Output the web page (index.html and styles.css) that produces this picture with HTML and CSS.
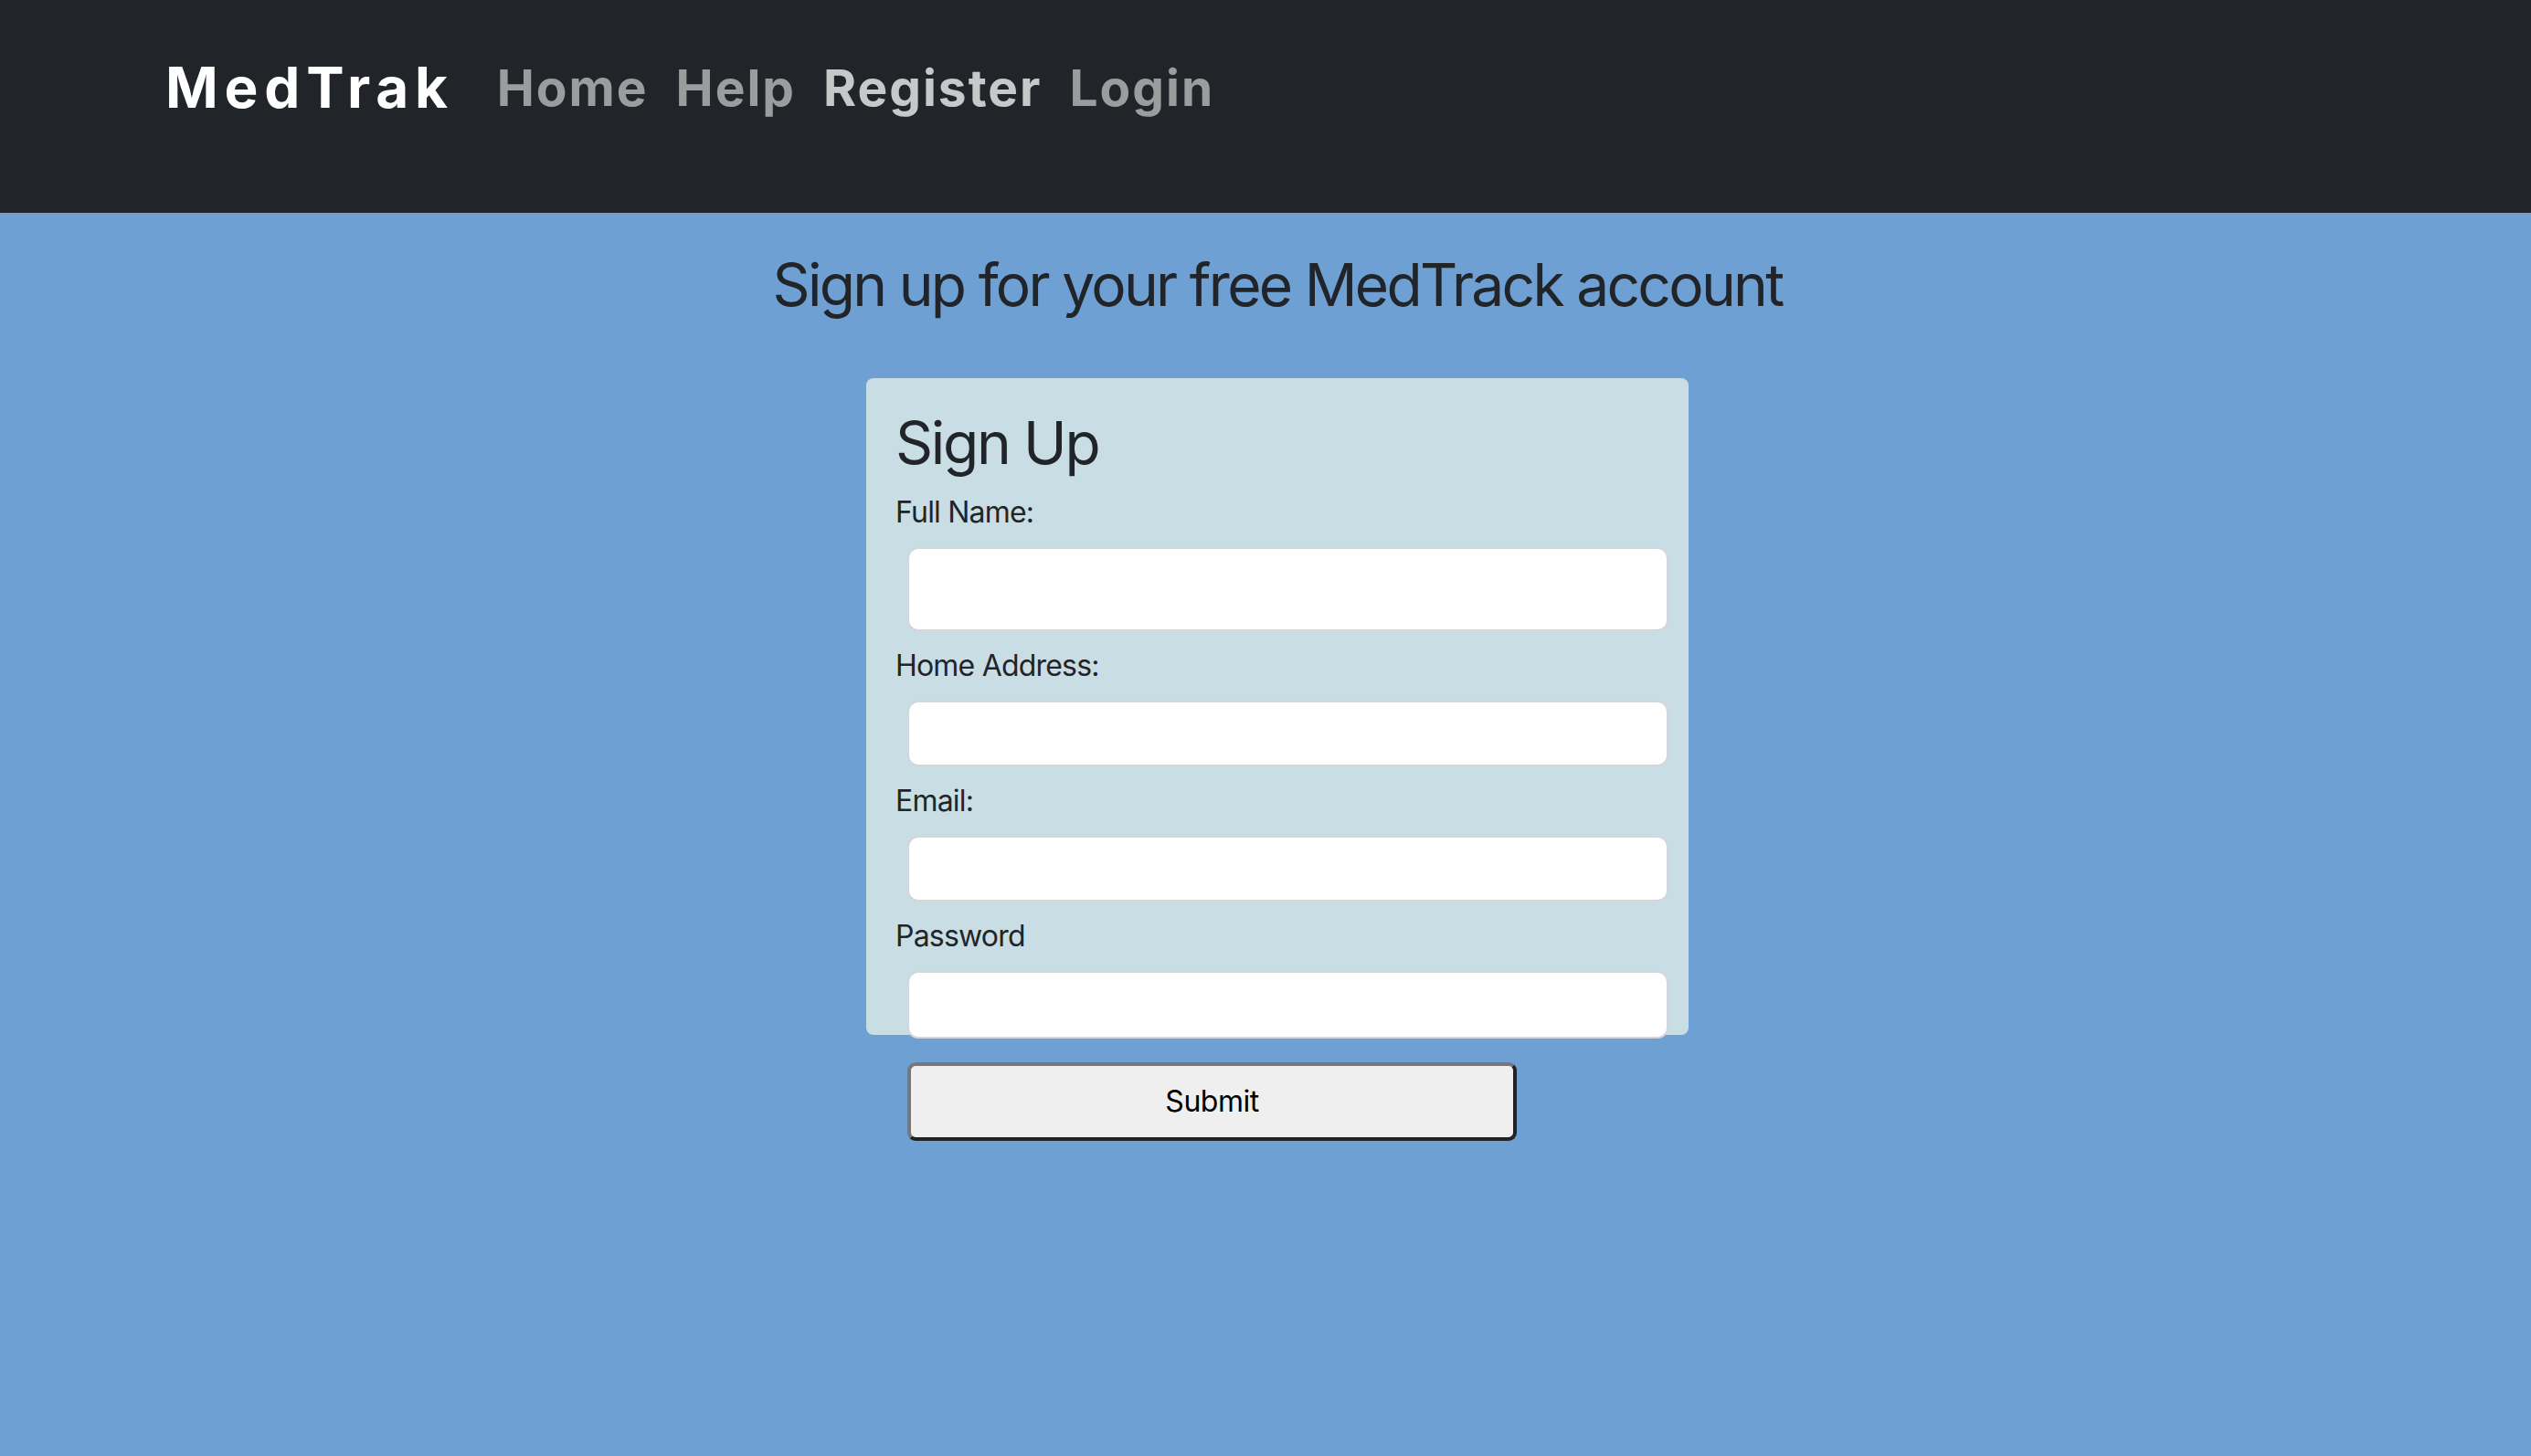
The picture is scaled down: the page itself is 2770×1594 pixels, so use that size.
FILE: index.html
```html
<!DOCTYPE html>
<html lang="en">
<head>
<meta charset="utf-8">
<title>MedTrak - Sign Up</title>
<link rel="stylesheet" href="styles.css">
</head>
<body>
  <nav class="navbar">
    <a class="brand" href="#">MedTrak</a>
    <ul class="nav-links">
      <li><a class="nav-link" href="#">Home</a></li>
      <li><a class="nav-link" href="#">Help</a></li>
      <li><a class="nav-link active" href="#">Register</a></li>
      <li><a class="nav-link" href="#">Login</a></li>
    </ul>
  </nav>
  <main class="page">
    <h2 class="page-title">Sign up for your free MedTrack account</h2>
    <section class="card">
      <h2 class="card-title">Sign Up</h2>
      <form class="signup-form">
        <label class="field-label" for="name">Full Name:</label>
        <input class="field field-name" id="name" type="text">
        <label class="field-label" for="address">Home Address:</label>
        <input class="field" id="address" type="text">
        <label class="field-label" for="email">Email:</label>
        <input class="field" id="email" type="email">
        <label class="field-label" for="password">Password</label>
        <input class="field field-last" id="password" type="password">
        <button class="submit" type="button">Submit</button>
      </form>
    </section>
  </main>
</body>
</html>
```
FILE: styles.css
```css
* { box-sizing: border-box; }

html, body {
  margin: 0;
  padding: 0;
}

body {
  background: #6fa0d4;
  font-family: Inter, "Noto Sans", "Liberation Sans", sans-serif;
  color: #212529;
  min-height: 1594px;
}

.navbar {
  background: #212529;
  height: 233px;
  display: flex;
  align-items: flex-start;
  padding: 65px 0 0 181px;
}

.brand {
  color: #ffffff;
  text-decoration: none;
  font-weight: 700;
  font-size: 62px;
  line-height: 1;
  letter-spacing: 0.11em;
  margin-right: 32px;
}

.nav-links {
  list-style: none;
  display: flex;
  margin: 4px 0 0 0;
  padding: 0;
}

.nav-link {
  display: block;
  padding: 0 15px;
  font-weight: 700;
  font-size: 55px;
  line-height: 1;
  letter-spacing: 2px;
  color: rgba(255, 255, 255, 0.55);
  text-decoration: none;
}

.nav-link.active {
  color: rgba(255, 255, 255, 0.75);
}

.page {
  padding-left: 26px;
}

.page-title {
  margin: 41px 0 0 0;
  text-align: center;
  font-weight: 400;
  font-size: 64px;
  line-height: 1.2;
  letter-spacing: -0.042em;
}

.card {
  width: 900px;
  height: 719px;
  margin: 63px auto 0 auto;
  padding: 33px 32px 0 32px;
  background: #c9dee4;
  border-radius: 8px;
}

.card-title {
  margin: 0 0 13px 0;
  font-weight: 400;
  font-size: 64px;
  line-height: 1.2;
  letter-spacing: -0.036em;
}

.signup-form {
  display: block;
}

.field-label {
  display: block;
  font-size: 32px;
  line-height: 48px;
  letter-spacing: -0.8px;
}

.field {
  display: block;
  width: 833px;
  height: 72px;
  margin: 14px 0 14px 13px;
  background: #ffffff;
  border: 2px solid #d3d6db;
  border-radius: 12px;
  font: inherit;
  font-size: 32px;
  padding: 0 24px;
}

.field-name {
  height: 92px;
}

.field-last {
  height: 74px;
}

.submit {
  display: block;
  width: 667px;
  height: 86px;
  margin: 26px 0 0 13px;
  background: #efefef;
  border: 4px solid;
  border-color: #777777 #222222 #222222 #777777;
  border-radius: 9px;
  font-family: Inter, "Noto Sans", "Liberation Sans", sans-serif;
  font-size: 32px;
  letter-spacing: -0.5px;
  color: #000000;
}
```
